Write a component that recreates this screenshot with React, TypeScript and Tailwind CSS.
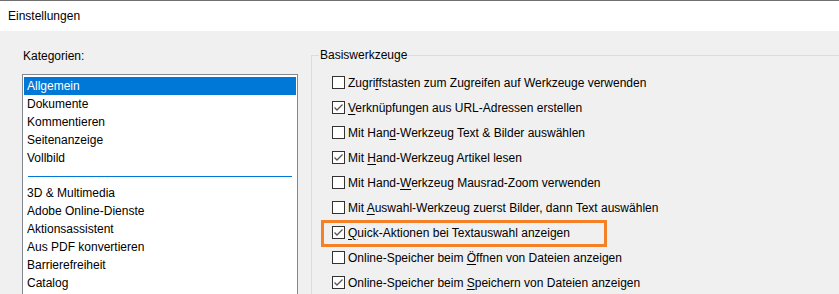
import React from 'react';

const font = { fontFamily: '"Liberation Sans", Arial, sans-serif' };

type Opt = { pre: string; key: string; post: string; checked: boolean; highlight?: boolean };

const options: Opt[] = [
  { pre: 'Zugri', key: 'f', post: 'fstasten zum Zugreifen auf Werkzeuge verwenden', checked: false },
  { pre: '', key: 'V', post: 'erknüpfungen aus URL-Adressen erstellen', checked: true },
  { pre: 'Mit Han', key: 'd', post: '-Werkzeug Text & Bilder auswählen', checked: false },
  { pre: 'Mit ', key: 'H', post: 'and-Werkzeug Artikel lesen', checked: true },
  { pre: 'Mit Hand-', key: 'W', post: 'erkzeug Mausrad-Zoom verwenden', checked: false },
  { pre: 'Mit ', key: 'A', post: 'uswahl-Werkzeug zuerst Bilder, dann Text auswählen', checked: false },
  { pre: '', key: 'Q', post: 'uick-Aktionen bei Textauswahl anzeigen', checked: true, highlight: true },
  { pre: 'Online-Speicher beim ', key: 'Ö', post: 'ffnen von Dateien anzeigen', checked: false },
  { pre: 'Online-Speicher beim ', key: 'S', post: 'peichern von Dateien anzeigen', checked: true },
];

const topItems = ['Allgemein', 'Dokumente', 'Kommentieren', 'Seitenanzeige', 'Vollbild'];
const moreItems = ['3D & Multimedia', 'Adobe Online-Dienste', 'Aktionsassistent', 'Aus PDF konvertieren', 'Barrierefreiheit', 'Catalog'];

const Checkbox = ({ checked }: { checked: boolean }) => (
  <span className="flex h-[13px] w-[13px] shrink-0 items-center justify-center border border-[#333333] bg-white">
    {checked && (
      <svg width="11" height="11" viewBox="0 0 11 11">
        <path d="M1.5 5.5 L4 8 L9.5 2.5" fill="none" stroke="#555555" strokeWidth="1.3" />
      </svg>
    )}
  </span>
);

const Row = ({ o }: { o: Opt }) => (
  <div className="relative flex h-[25px] items-center gap-[3px]">
    {o.highlight && (
      <span className="pointer-events-none absolute left-[-11px] top-[-0.5px] h-[27px] w-[286px] border-[3px] border-[#f58025]" />
    )}
    <Checkbox checked={o.checked} />
    <span className="whitespace-nowrap text-[12px] leading-4 text-black">
      {o.pre}
      <span className="underline underline-offset-2">{o.key}</span>
      {o.post}
    </span>
  </div>
);

export default function App() {
  return (
    <div className="flex h-[294px] w-[839px] flex-col overflow-hidden bg-[#f0f0f0]" style={font}>
      <div className="h-px shrink-0 bg-[#707070]" />
      <div className="flex h-[30px] shrink-0 items-center bg-white pl-2 text-[12px] text-black">Einstellungen</div>
      <div className="flex min-h-0 flex-1">
        <div className="w-[311px] shrink-0 pl-[22px] pt-[17px]">
          <div className="mb-[10px] pl-px text-[12px] leading-4 text-black">Kategorien:</div>
          <div className="h-[300px] w-[276px] border border-[#828790] bg-white px-px pt-[2px] text-[12px] text-black">
            {topItems.map((t, i) => (
              <div
                key={t}
                className={`flex h-[18px] items-center pl-[3px] ${i === 0 ? 'bg-[#0078d7] text-white' : ''}`}
              >
                {t}
              </div>
            ))}
            <div className="flex h-[17px] items-start px-1 pt-[9px]">
              <div className="h-px w-full bg-[#0078d7]" />
            </div>
            {moreItems.map((t) => (
              <div key={t} className="flex h-[18px] items-center pl-[3px]">
                {t}
              </div>
            ))}
          </div>
        </div>
        <fieldset className="mt-4 h-[300px] flex-1 border-l border-t border-[#dcdcdc]">
          <legend className="ml-[7px] px-px text-[12px] leading-4 text-black">Basiswerkzeuge</legend>
          <div className="pl-5 pt-[7px]">
            {options.map((o) => (
              <Row key={o.post} o={o} />
            ))}
          </div>
        </fieldset>
      </div>
    </div>
  );
}
